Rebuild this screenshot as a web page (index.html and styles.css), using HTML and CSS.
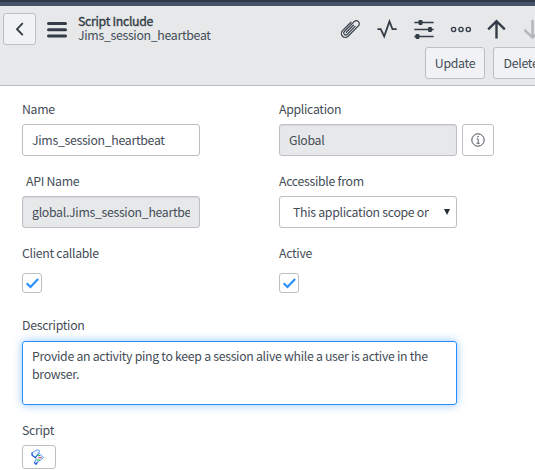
FILE: index.html
```html
<!DOCTYPE html>
<html lang="en">
<head>
<meta charset="utf-8">
<title>Script Include | Jims_session_heartbeat</title>
<link rel="stylesheet" href="styles.css">
</head>
<body>
<header class="header">
  <div class="header-main">
    <button class="btn back" aria-label="Back"><svg width="32" height="30" viewBox="0 0 32 30"><path d="M18.8 9.2 13 15.2l5.8 6" fill="none" stroke="#343d47" stroke-width="1.9"/></svg></button>
    <svg class="menu" width="20" height="16" viewBox="0 0 20 16"><path d="M1.5 1.6h17M1.5 7.8h17M1.5 14h17" stroke="#343d47" stroke-width="3" stroke-linecap="round"/></svg>
    <div class="titles">
      <h1 class="title">Script Include</h1>
      <div class="subtitle">Jims_session_heartbeat</div>
    </div>
    <div class="tools">
      <svg class="tool" width="22" height="22" viewBox="0 0 22 22"><g transform="rotate(45 11 11)" fill="none" stroke="#343d47" stroke-width="1.2" stroke-linecap="round"><path d="M6.900 5.500v12a3.900 3.900 0 0 0 7.800 0V2.800a3 3 0 0 0-6 0v14a2 2 0 0 0 4 0V5.500"/><path d="M10.700 6v10"/></g></svg>
      <svg class="tool" width="22" height="22" viewBox="0 0 22 22"><path d="M1.500 11.200h3.200l3.500 7.200L13.500 3.400l3 7.800h4.200" fill="none" stroke="#343d47" stroke-width="1.8"/></svg>
      <svg class="tool" width="22" height="22" viewBox="0 0 22 22"><g stroke="#343d47" fill="#343d47"><path d="M1.300 4.500h19.400M1.300 11.500h19.400M1.300 18.500h19.400" stroke-width="1.300"/><g stroke="none"><rect x="5.500" y="2" width="4" height="5" rx="1.200"/><rect x="15" y="9" width="4" height="5" rx="1.200"/><rect x="2.500" y="16" width="4" height="5" rx="1.200"/></g></g></svg>
      <svg class="tool" width="22" height="22" viewBox="0 0 22 22"><g fill="none" stroke="#343d47" stroke-width="1.400"><circle cx="3.600" cy="11.500" r="2.100"/><circle cx="11" cy="11.500" r="2.100"/><circle cx="18.300" cy="11.500" r="2.100"/></g></svg>
      <svg class="tool" width="22" height="22" viewBox="0 0 22 22"><path d="M9.500 20.500V3.500M1.200 11.300 9.500 3.200l8.300 8.100" fill="none" stroke="#343d47" stroke-width="2.400"/></svg>
      <svg class="tool" width="22" height="22" viewBox="0 0 22 22"><path d="M8.500 2v17M.2 11.700l8.300 7.800 8.300-7.800" fill="none" stroke="#b1b6bb" stroke-width="2.400"/></svg>
    </div>
  </div>
  <div class="actions">
    <button class="btn update">Update</button>
    <button class="btn delete">Delete</button>
  </div>
</header>
<main class="form">
  <div class="field">
    <div class="label">Name</div>
    <div class="control"><span class="value">Jims_session_heartbeat</span></div>
  </div>
  <div class="field">
    <div class="label">Application</div>
    <div class="with-info">
      <div class="control readonly">Global</div>
      <button class="info" aria-label="Info"><svg width="14" height="14" viewBox="0 0 14 14"><circle cx="7" cy="7" r="6.200" fill="none" stroke="#343d47" stroke-width=".9"/><path d="M5.800 6H7.200v4.200M5.500 10.300h3.200" fill="none" stroke="#343d47" stroke-width=".8"/><circle cx="7" cy="3.800" r=".7" fill="#343d47"/></svg></button>
    </div>
  </div>
  <div class="field">
    <div class="label indented">API Name</div>
    <div class="control readonly"><span class="value">global.Jims_session_heartbeat</span></div>
  </div>
  <div class="field">
    <div class="label">Accessible from</div>
    <div class="control select"><span class="value">This application scope only</span><svg class="caret" width="6" height="6" viewBox="0 0 6 6"><path d="M0 0h6L3 6z" fill="#252d35"/></svg></div>
  </div>
  <div class="field">
    <div class="label">Client callable</div>
    <div class="checkbox"><svg width="18" height="18" viewBox="0 0 18 18"><path d="M3.700 9.200 7.500 13l7.600-8" fill="none" stroke="#278efc" stroke-width="2.100"/></svg></div>
  </div>
  <div class="field">
    <div class="label">Active</div>
    <div class="checkbox"><svg width="18" height="18" viewBox="0 0 18 18"><path d="M3.700 9.200 7.500 13l7.600-8" fill="none" stroke="#278efc" stroke-width="2.100"/></svg></div>
  </div>
  <div class="field wide description">
    <div class="label">Description</div>
    <div class="textarea">Provide an activity ping to keep a session alive while a user is active in the browser.</div>
  </div>
  <div class="field wide script">
    <div class="label">Script</div>
    <button class="script-btn" aria-label="Toggle syntax editor"><svg width="14" height="16" viewBox="0 0 14 16"><path d="M1 4 6 .7l2.500 1L7.800 4l4.700 4.500-6 5-1.200 2-2-1.500 2-4.500L1.500 7z" fill="#e9f4ff" stroke="#5b9bf5" stroke-width="1"/><path d="M1 3.500v2.800l3.500 2.200 3-4M3 13.200l2 2 1.500-2.500" stroke="#2058dc" stroke-width="1.100" fill="none"/><path d="M6.500 6.500h2.500M5.500 11h3.500" stroke="#2bc12f"/><path d="M7.500 8.700h3" stroke="#e4202b"/></svg></button>
  </div>
</main>
</body>
</html>
```
FILE: styles.css
```css
* {
  box-sizing: border-box;
}

body {
  margin: 0;
  height: 470px;
  overflow: hidden;
  background: #fff;
  color: #444d57;
  font: 12.3px/18px "Noto Sans CJK SC", "Noto Sans", sans-serif;
  letter-spacing: -.3px;
}

button {
  padding: 0;
  color: inherit;
  font: inherit;
  letter-spacing: inherit;
}

svg {
  display: block;
  flex: none;
}

.header {
  height: 86px;
  padding-top: 7px;
  overflow: hidden;
  border-top: 2px solid #2d3847;
  border-bottom: 1px solid #b8bbbe;
  background: linear-gradient(#465467 4px, #e6e8ea 4px);
}

.header-main {
  display: flex;
  height: 38px;
  padding-left: 3px;
}

.btn {
  flex: none;
  height: 32px;
  border: 1px solid #bcbfc3;
  border-radius: 3px;
  background: #f1f2f5;
}

.back {
  width: 33px;
  margin-top: 4px;
}

.menu {
  margin: 13px 0 0 11px;
}

.titles {
  flex: none;
  width: 261px;
  margin: 5px 0 0 11px;
  line-height: 14px;
}

.title {
  margin: 0;
  color: #343d47;
  font-size: inherit;
  font-weight: 400;
  -webkit-text-stroke: .35px #343d47;
}

.tools {
  display: flex;
  flex: none;
  gap: 15px;
  margin-top: 9px;
}

.actions {
  display: flex;
  gap: 8px;
  padding-left: 425px;
}

.update {
  width: 60px;
}

.delete {
  width: 56px;
}

.form {
  display: grid;
  grid-template-columns: 178px 215px;
  grid-template-rows: 72px 72px 72px 105px auto;
  column-gap: 79px;
  padding: 14px 22px 0;
}

.label {
  height: 24px;
}

.indented {
  padding-left: 4px;
}

.control {
  display: flex;
  align-items: center;
  width: 178px;
  height: 32px;
  padding: 0 9px;
  border: 1px solid #bcbfc3;
  border-radius: 3px;
}

.readonly {
  background: #e6e8ea;
  box-shadow: inset 0 1px 1px #d5d7da;
}

.value {
  overflow: hidden;
  white-space: nowrap;
}

.select {
  padding: 0 6px 0 13px;
}

.select .value {
  width: 136px;
}

.caret {
  margin-left: auto;
}

.with-info {
  display: flex;
  gap: 5px;
}

.info {
  display: grid;
  place-items: center;
  width: 32px;
  height: 32px;
  border: 1px solid #bcbfc3;
  border-radius: 3px;
  background: #fff;
}

.checkbox {
  width: 20px;
  height: 20px;
  margin-top: 5px;
  border: 1px solid #bcbfc3;
  border-radius: 3px;
}

.wide {
  grid-column: 1 / -1;
}

.textarea {
  width: 435px;
  height: 64px;
  margin-top: 1px;
  padding: 5px 9px;
  border: 1px solid #278efc;
  border-radius: 3px;
  box-shadow: 0 0 8px rgba(39, 142, 252, .5);
}

.script-btn {
  display: block;
  width: 34px;
  height: 24px;
  padding-left: 8px;
  border: 1px solid #bcbfc3;
  border-radius: 3px;
  background: #fff;
}
```
